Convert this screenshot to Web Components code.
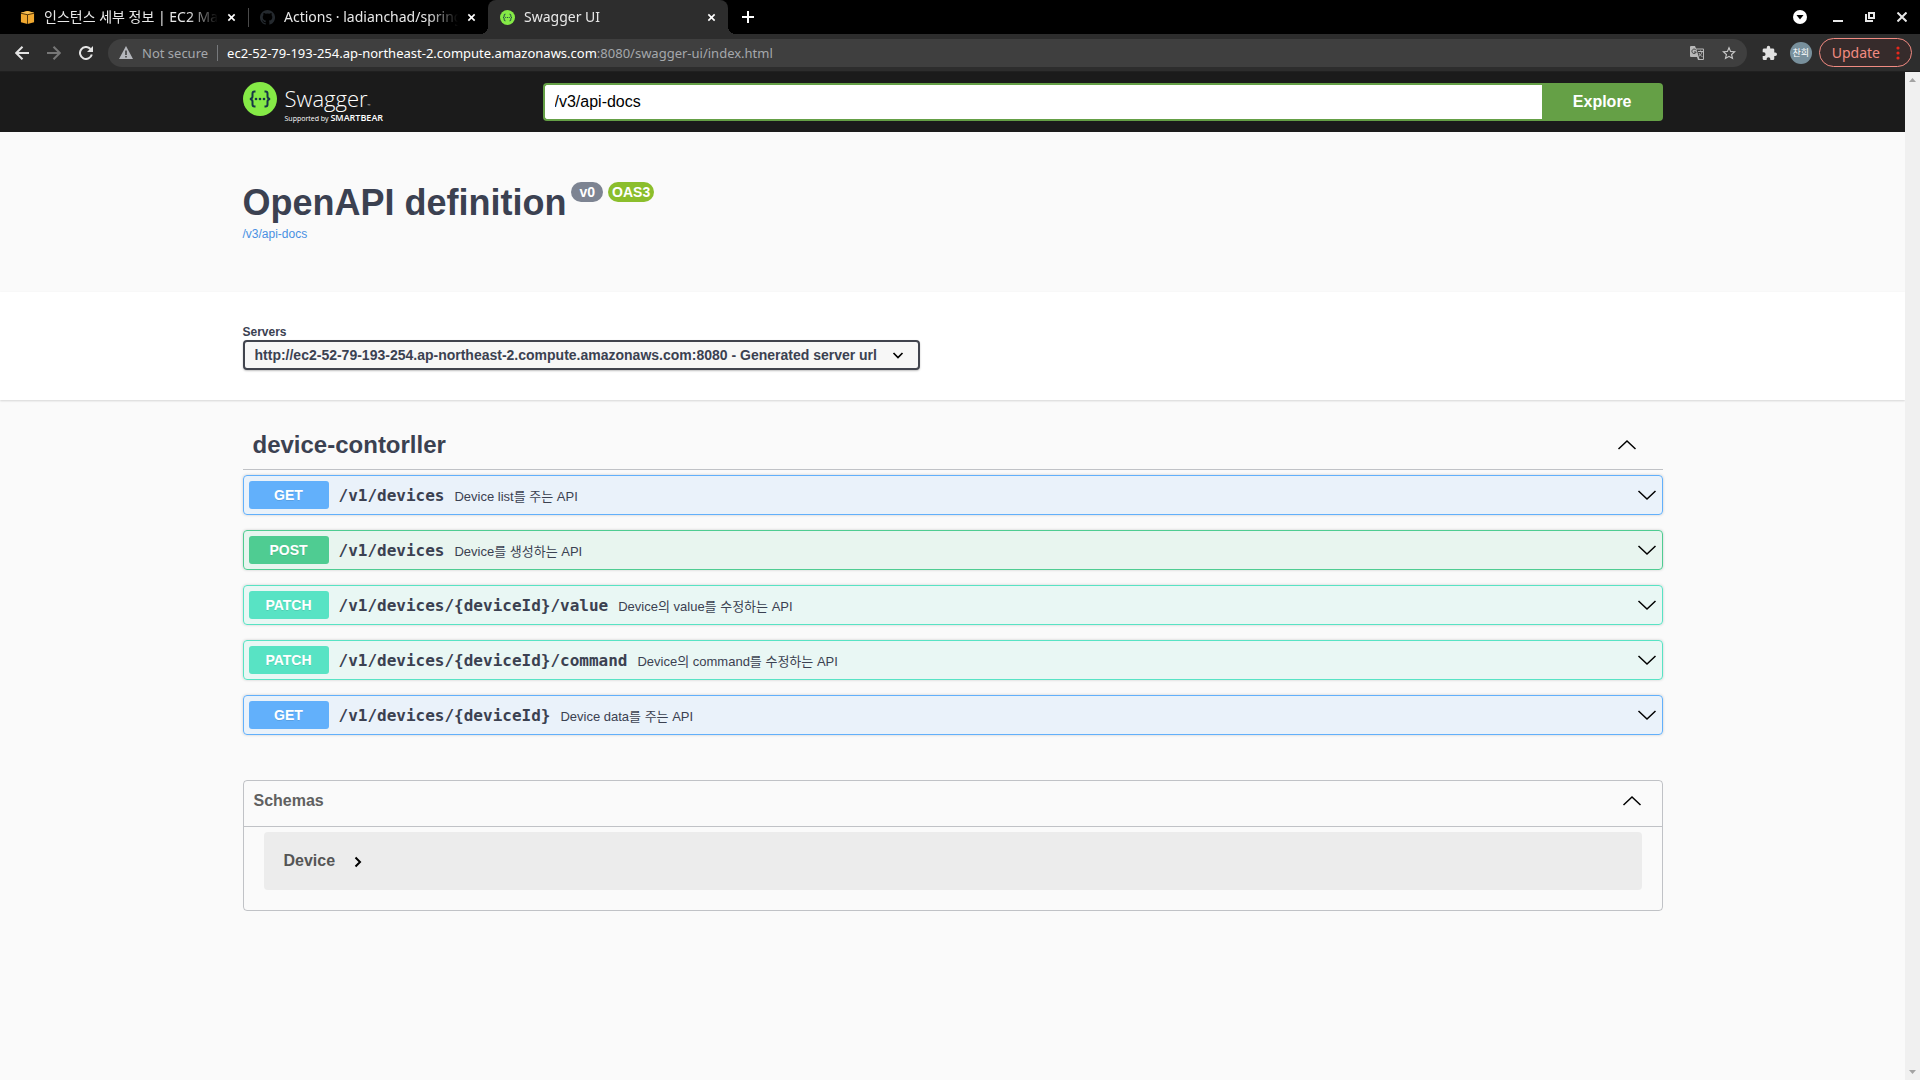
<!DOCTYPE html>
<html lang="en">
<head>
<meta charset="utf-8">
<title>Swagger UI</title>
<style>
  html, body {
    margin: 0;
    height: 100%;
  }

  body {
    font-family: "Liberation Sans", "Noto Sans CJK KR", sans-serif;
    color: #3b4151;
    background: #fafafa;
  }
</style>
</head>
<body>
<browser-window>
  <browser-tab slot="tabs" icon="cube">인스턴스 세부 정보 | EC2 Management</browser-tab>
  <browser-tab slot="tabs" icon="github">Actions · ladianchad/spring-server</browser-tab>
  <browser-tab slot="tabs" icon="swagger" active>Swagger UI</browser-tab>
  <address-bar slot="toolbar" host="ec2-52-79-193-254.ap-northeast-2.compute.amazonaws.com" path=":8080/swagger-ui/index.html"></address-bar>

  <swagger-topbar url="/v3/api-docs"></swagger-topbar>
  <api-info version="v0" spec="OAS3" href="/v3/api-docs">OpenAPI definition</api-info>
  <server-picker url="http://ec2-52-79-193-254.ap-northeast-2.compute.amazonaws.com:8080 - Generated server url"></server-picker>
  <tag-section name="device-contorller">
    <op-block method="get" path="/v1/devices">Device list를 주는 API</op-block>
    <op-block method="post" path="/v1/devices">Device를 생성하는 API</op-block>
    <op-block method="patch" path="/v1/devices/{deviceId}/value">Device의 value를 수정하는 API</op-block>
    <op-block method="patch" path="/v1/devices/{deviceId}/command">Device의 command를 수정하는 API</op-block>
    <op-block method="get" path="/v1/devices/{deviceId}">Device data를 주는 API</op-block>
  </tag-section>
  <schema-list>
    <schema-model>Device</schema-model>
  </schema-list>
</browser-window>

<script>
/* Inner markup of every icon, with the viewBox it is drawn in */
const icons = {
  cube: ['0 0 16 16', '<path fill="#f0a830" d="M1 3 8 1l7 2v10l-7 2-7-2z"/><path fill="#f7bd50" d="m1 3 7-2 7 2-7 2z"/><path fill="none" stroke="#4a2f05" stroke-width="1" d="m1 3.500 7 1.500 7-1.500M8 5v10"/>'],
  github: ['0 0 16 16', '<path fill="#24292e" d="M8 0a8 8 0 0 0-2.530 15.590c.4.070.55-.17.55-.38l-.01-1.490c-2.010.37-2.530-.49-2.690-.94-.09-.23-.48-.94-.82-1.130-.28-.15-.68-.52-.01-.53.63-.01 1.080.58 1.230.82.72 1.210 1.870.87 2.330.66.07-.52.28-.87.51-1.070-1.780-.2-3.640-.89-3.640-3.950 0-.87.31-1.590.82-2.150-.08-.2-.36-1.020.08-2.120 0 0 .67-.21 2.200.82a7.600 7.600 0 0 1 4 0c1.530-1.040 2.200-.82 2.200-.82.44 1.100.16 1.920.08 2.120.51.56.82 1.270.82 2.150 0 3.070-1.870 3.750-3.650 3.950.29.25.54.73.54 1.480l-.01 2.200c0 .21.15.46.55.38A8 8 0 0 0 8 0z"/>'],
  swagger: ['0 0 34 34', '<circle cx="17" cy="17" r="17" fill="#85ea46"/><path fill="none" stroke="#173647" stroke-width="2" d="M12.500 9.500h-1q-2 0-2 2v3q0 2-2.500 2.500 2.500.5 2.500 2.500v3q0 2 2 2h1M21.500 9.500h1q2 0 2 2v3q0 2 2.500 2.500-2.500.5-2.500 2.500v3q0 2-2 2h-1"/><g fill="#173647"><circle cx="13" cy="17" r="1.300"/><circle cx="17" cy="17" r="1.300"/><circle cx="21" cy="17" r="1.300"/></g>'],
  close: ['0 0 10 10', '<path fill="none" stroke="#fff" stroke-width="1.800" d="m1.500 1.500 7 7m0-7-7 7"/>'],
  plus: ['0 0 12 12', '<path fill="none" stroke="#fff" stroke-width="2" d="M6 0v12M0 6h12"/>'],
  down: ['0 0 14 14', '<circle cx="7" cy="7" r="7" fill="#fff"/><path d="M3.500 5h7L7 9.500z"/>'],
  minimize: ['0 0 10 10', '<path fill="#e8e8e8" d="M0 8h10v2H0z"/>'],
  restore: ['0 0 10 10', '<path fill="none" stroke="#e8e8e8" stroke-width="2" d="M4 1h5v5H4zM1 2v7h7"/>'],
  quit: ['0 0 10 10', '<path fill="none" stroke="#e8e8e8" stroke-width="2" d="m.5.5 9 9m0-9-9 9"/>'],
  back: ['0 0 14 14', '<path fill="none" stroke="#e4e4e4" stroke-width="2" d="M14 7H1.500M7.500.7 1.200 7l6.300 6.300"/>'],
  forward: ['0 0 14 14', '<path fill="none" stroke="#777" stroke-width="2" d="M0 7h12.500M6.500.7 12.800 7l-6.300 6.300"/>'],
  reload: ['0 0 14 14', '<path fill="none" stroke="#e4e4e4" stroke-width="2" d="M12.800 8.500A6 6 0 1 1 11.500 3"/><path fill="#e4e4e4" d="M14 0v6H8z"/>'],
  warning: ['0 0 14 13', '<path fill="#b4b6bb" d="M7 0l7 13H0z"/><path fill="#3f3f3f" d="M6.200 4.500h1.600V9H6.200zM6.200 10h1.600v1.600H6.200z"/>'],
  translate: ['0 0 14 14', '<path fill="#b8b8b8" d="M1 0h4l1 2.500h7a1 1 0 0 1 1 1V13a1 1 0 0 1-1 1H8l-1-3H1a1 1 0 0 1-1-1V1a1 1 0 0 1 1-1z"/><path fill="#3f3f3f" d="m6.500 3.500 3 9.500H13V3.500z"/><path fill="none" stroke="#3f3f3f" d="M6 4.200A2.200 2.200 0 1 0 6.200 6H4"/><path fill="none" stroke="#b8b8b8" d="M8 5.500h5M10.500 4.500v1M12 6c-.5 2-2 3.500-3 4.200M9 7c.5 1.500 2 3 3.500 3.700"/>'],
  star: ['0 0 24 24', '<path fill="#c9c9c9" d="m24 9.200-8.600-.7L12 .6 8.600 8.500 0 9.200l6.500 5.700-2 8.400 7.500-4.500 7.500 4.500-2-8.400zM12 16.600l-4.500 2.700 1.200-5.100-4-3.500 5.200-.4L12 5.500l2.100 4.800 5.200.4-4 3.500 1.200 5.100z"/>'],
  puzzle: ['1 0 22 22', '<path fill="#e0e0e0" d="M20.500 11H19V7a2 2 0 0 0-2-2h-4V3.500a2.500 2.500 0 0 0-5 0V5H4a2 2 0 0 0-2 2v3.800h1.500a2.700 2.700 0 0 1 0 5.400H2V20a2 2 0 0 0 2 2h3.800v-1.500a2.700 2.700 0 0 1 5.400 0V22H17a2 2 0 0 0 2-2v-4h1.500a2.500 2.500 0 0 0 0-5z"/>'],
  dots: ['0 0 4 14', '<g fill="#e8281c"><circle cx="2" cy="2" r="1.600"/><circle cx="2" cy="7" r="1.600"/><circle cx="2" cy="12" r="1.600"/></g>'],
  'scroll-up': ['0 0 7 4', '<path fill="#a3a3a3" d="M0 4 3.500 0 7 4z"/>'],
  'scroll-down': ['0 0 7 4', '<path fill="#a3a3a3" d="m0 0 3.500 4L7 0z"/>'],
  expand: ['0 0 20 20', '<path fill="none" stroke="#000" stroke-width="1.500" d="m1.500 6 8.500 8 8.500-8"/>'],
  collapse: ['0 0 20 20', '<path fill="none" stroke="#000" stroke-width="1.500" d="m1.500 14 8.500-8 8.500 8"/>'],
  select: ['0 0 20 20', '<path fill="none" stroke="#000" stroke-width="1.700" d="m5.500 8 4.500 4.500L14.500 8"/>'],
  model: ['0 0 20 20', '<path fill="none" stroke="#000" stroke-width="2" d="m7.500 6.500 4.500 4.500-4.500 4.500"/>']
}

/**
 * Draws one icon.
 *
 * @param {string} name - Key in the icons object.
 * @param {number} width - Width in pixels.
 * @param {number} height - Height in pixels, same as the width by default.
 * @returns {string} The svg markup.
 */
const icon = (name, width, height = width) =>
  `<svg width="${width}" height="${height}" viewBox="${icons[name][0]}" aria-hidden="true">${icons[name][1]}</svg>`

/* Shared reset, every shadow root starts with it */
const base = `
  :host, * { box-sizing: border-box; }
  svg { display: block; flex: none; }
  button {
    font: inherit;
    color: inherit;
    background: none;
    border: 0;
    padding: 0;
    margin: 0;
    cursor: pointer;
  }
  .wrapper {
    max-width: 1460px;
    margin: 0 auto;
    padding: 0 20px;
  }
`

/**
 * Registers a custom element that renders its markup once.
 *
 * @param {string} name - The tag name.
 * @param {Function} render - Gets the element, returns the shadow root markup.
 */
const define = (name, render) => {
  customElements.define(name, class extends HTMLElement {
    constructor () {
      super()
      this.attachShadow({ mode: 'open' })
    }

    connectedCallback () {
      const template = document.createElement('template')
      template.innerHTML = render(this)
      this.shadowRoot.replaceChildren(template.content.cloneNode(true))
    }
  })
}

define('browser-window', () => `
  <style>
    ${base}
    :host {
      display: flex;
      flex-direction: column;
      height: 100vh;
    }
    .tabs {
      display: flex;
      align-items: center;
      height: 34px;
      padding-left: 8px;
      background: #000;
      flex: none;
    }
    .new { padding: 0 14px; }
    .controls {
      display: flex;
      align-items: center;
      gap: 22px;
      margin-left: auto;
      padding-right: 13px;
    }
    .controls > :first-child { margin-right: 4px; }
    .view {
      display: flex;
      flex: 1;
      min-height: 0;
    }
    main {
      flex: 1;
      overflow: hidden;
    }
    .scroll {
      display: flex;
      flex-direction: column;
      justify-content: space-between;
      align-items: center;
      width: 15px;
      padding: 6px 0;
      background: #f0f0f0;
    }
  </style>
  <div class="tabs">
    <slot name="tabs"></slot>
    <button class="new" aria-label="New tab">${icon('plus', 12)}</button>
    <div class="controls">
      <button aria-label="Search tabs">${icon('down', 14)}</button>
      <button aria-label="Minimize">${icon('minimize', 10)}</button>
      <button aria-label="Restore">${icon('restore', 10)}</button>
      <button aria-label="Close">${icon('quit', 10)}</button>
    </div>
  </div>
  <slot name="toolbar"></slot>
  <div class="view">
    <main><slot></slot></main>
    <div class="scroll">${icon('scroll-up', 7, 4)}${icon('scroll-down', 7, 4)}</div>
  </div>
`)

define('browser-tab', (el) => `
  <style>
    ${base}
    :host {
      display: flex;
      align-items: center;
      gap: 9px;
      flex: 0 1 240px;
      min-width: 0;
      height: 34px;
      padding: 0 12px;
      position: relative;
      font: 14px/20px "Noto Sans", "Noto Sans CJK KR", sans-serif;
      color: #e8e8e8;
    }
    :host(:not([active]):not(:first-child))::before {
      content: "";
      position: absolute;
      left: 0;
      top: 8px;
      width: 1px;
      height: 19px;
      background: #4a4a4a;
    }
    :host([active]) {
      background: #2d2d2d;
      border-radius: 8px 8px 0 0;
    }
    /* outward curves at the foot of the active tab */
    :host([active])::before,
    :host([active])::after {
      content: "";
      position: absolute;
      bottom: 0;
      width: 8px;
      height: 8px;
    }
    :host([active])::before {
      right: 100%;
      background: radial-gradient(circle at 0 0, #000 8px, #2d2d2d 8px);
    }
    :host([active])::after {
      left: 100%;
      background: radial-gradient(circle at 100% 0, #000 8px, #2d2d2d 8px);
    }
    .title {
      flex: 1;
      overflow: hidden;
      white-space: nowrap;
      mask-image: linear-gradient(to left, transparent, #000 30px);
    }
  </style>
  ${icon(el.getAttribute('icon'), 15)}
  <span class="title"><slot></slot></span>
  <button aria-label="Close tab">${icon('close', 9)}</button>
`)

define('address-bar', (el) => `
  <style>
    ${base}
    :host {
      display: flex;
      align-items: center;
      height: 38px;
      padding: 0 8px 0 15px;
      background: #2d2d2d;
      border-bottom: 1px solid #202020;
      font: 13px/20px "Noto Sans", "Noto Sans CJK KR", sans-serif;
      flex: none;
    }
    .nav {
      display: flex;
      gap: 18px;
      margin-right: 15px;
    }
    .omnibox {
      display: flex;
      align-items: center;
      flex: 1;
      height: 28px;
      padding: 0 11px;
      border-radius: 14px;
      background: #3f3f3f;
      color: #a5a8ac;
    }
    .state { margin: 0 9px; }
    .location {
      flex: 1;
      padding-left: 9px;
      line-height: 16px;
      border-left: 1px solid #77797c;
    }
    .location b {
      font-weight: 400;
      color: #fff;
    }
    .page { margin-left: 18px; }
    .extensions { margin: 0 13px 0 15px; }
    .avatar {
      width: 22px;
      height: 22px;
      border-radius: 50%;
      background: #78909c;
      color: #fff;
      font-size: 9px;
      line-height: 22px;
      text-align: center;
    }
    .update {
      display: flex;
      align-items: center;
      gap: 16px;
      height: 29px;
      margin-left: 7px;
      padding: 0 11px 0 12px;
      border: 1px solid #f28b82;
      border-radius: 15px;
      background: #362b2b;
      color: #f28b82;
      font-size: 14px;
    }
  </style>
  <div class="nav">
    <button aria-label="Back">${icon('back', 14)}</button>
    <button aria-label="Forward">${icon('forward', 14)}</button>
    <button aria-label="Reload">${icon('reload', 14)}</button>
  </div>
  <div class="omnibox">
    ${icon('warning', 14, 13)}
    <span class="state">Not secure</span>
    <span class="location"><b>${el.getAttribute('host')}</b>${el.getAttribute('path')}</span>
    <button class="page" aria-label="Translate">${icon('translate', 14)}</button>
    <button class="page" aria-label="Bookmark">${icon('star', 14)}</button>
  </div>
  <button class="extensions" aria-label="Extensions">${icon('puzzle', 15)}</button>
  <button class="avatar">찬희</button>
  <button class="update">Update ${icon('dots', 4, 14)}</button>
`)

define('swagger-topbar', (el) => `
  <style>
    ${base}
    :host {
      display: block;
      padding: 10px 0;
      background: #1b1b1b;
    }
    .wrapper {
      display: flex;
      align-items: center;
    }
    .logo {
      display: flex;
      gap: 8px;
      flex: 0 0 300px;
      height: 40px;
      color: #fff;
      text-decoration: none;
      font-family: "Open Sans", sans-serif;
    }
    .name {
      display: block;
      padding-top: 3px;
      font-size: 22px;
      font-weight: 300;
      line-height: 26px;
    }
    .name small {
      font-size: 4px;
      line-height: 1;
    }
    .by {
      display: block;
      margin-top: 2px;
      font-size: 7px;
      line-height: 8px;
    }
    .by b {
      font-size: 9px;
      font-weight: 600;
      line-height: 1;
    }
    form {
      display: flex;
      flex: 1;
      height: 38px;
    }
    input {
      flex: 1;
      min-width: 0;
      padding: 0 10px;
      border: 2px solid #65a046;
      border-right: 0;
      border-radius: 4px 0 0 4px;
      background: #fff;
      color: #000;
      font: 16px "Liberation Sans", sans-serif;
    }
    form button {
      padding: 0 31px;
      border-radius: 0 4px 4px 0;
      background: #65a046;
      color: #fff;
      font-size: 16px;
      font-weight: 700;
    }
  </style>
  <div class="wrapper">
    <a class="logo" href="#">
      ${icon('swagger', 34)}
      <span>
        <span class="name">Swagger<small>™</small></span>
        <span class="by">Supported by <b>SMARTBEAR</b></span>
      </span>
    </a>
    <form>
      <input type="text" aria-label="Definition url" value="${el.getAttribute('url')}">
      <button type="button">Explore</button>
    </form>
  </div>
`)

define('api-info', (el) => `
  <style>
    ${base}
    :host {
      display: block;
      padding: 50px 0;
    }
    .title {
      display: flex;
      align-items: flex-start;
      gap: 5px;
      margin-bottom: 3px;
    }
    h2 {
      margin: 0;
      font-size: 36px;
      line-height: 41px;
    }
    .badge {
      padding: 0 4px;
      border-radius: 10px;
      background: #8bbe2c;
      color: #fff;
      font-size: 14px;
      font-weight: 700;
      line-height: 20px;
    }
    .version {
      padding: 0 8px;
      background: #7d8492;
    }
    a {
      display: block;
      color: #4990e2;
      font-size: 12px;
      line-height: 16px;
      text-decoration: none;
    }
  </style>
  <div class="wrapper">
    <div class="title">
      <h2><slot></slot></h2>
      <span class="badge version">${el.getAttribute('version')}</span>
      <span class="badge">${el.getAttribute('spec')}</span>
    </div>
    <a href="${el.getAttribute('href')}">${el.getAttribute('href')}</a>
  </div>
`)

define('server-picker', (el) => `
  <style>
    ${base}
    :host {
      display: block;
      padding: 30px 0;
      background: #fff;
      box-shadow: 0 1px 2px 0 rgba(0, 0, 0, .15);
    }
    label {
      display: block;
      padding-top: 2px;
      font-size: 12px;
      font-weight: 700;
      line-height: 16px;
    }
    .select {
      display: inline-grid;
      align-items: center;
      vertical-align: top;
    }
    .select > * { grid-area: 1 / 1; }
    .select svg {
      justify-self: end;
      margin-right: 12px;
      pointer-events: none;
    }
    select {
      appearance: none;
      height: 30px;
      padding: 0 40px 0 10px;
      border: 2px solid #41444e;
      border-radius: 4px;
      background: #f7f7f7;
      box-shadow: 0 1px 2px 0 rgba(0, 0, 0, .25);
      color: #3b4151;
      font: 700 14px "Liberation Sans", sans-serif;
    }
  </style>
  <div class="wrapper">
    <label for="servers">Servers</label>
    <div class="select">
      <select id="servers"><option>${el.getAttribute('url')}</option></select>
      ${icon('select', 20)}
    </div>
  </div>
`)

define('tag-section', (el) => `
  <style>
    ${base}
    :host {
      display: block;
      padding: 20px 0 45px;
    }
    .header {
      display: flex;
      align-items: center;
      justify-content: space-between;
      margin-bottom: 5px;
      padding: 10px 26px 10px 10px;
      border-bottom: 1px solid rgba(59, 65, 81, .3);
    }
    h3 {
      margin: 0;
      font-size: 24px;
      line-height: 29px;
    }
    .operations {
      display: flex;
      flex-direction: column;
      gap: 15px;
    }
  </style>
  <div class="wrapper">
    <div class="header">
      <h3>${el.getAttribute('name')}</h3>
      <button aria-label="Collapse operation">${icon('collapse', 20)}</button>
    </div>
    <div class="operations"><slot></slot></div>
  </div>
`)

define('op-block', (el) => `
  <style>
    ${base}
    :host {
      --method: 98, 176, 251;
      display: flex;
      align-items: center;
      gap: 10px;
      height: 40px;
      padding: 0 5px;
      border: 1px solid rgb(var(--method));
      border-radius: 4px;
      background: rgba(var(--method), .1);
      box-shadow: 0 0 3px rgba(0, 0, 0, .19);
    }
    :host([method="post"]) { --method: 79, 204, 146; }
    :host([method="patch"]) { --method: 88, 227, 196; }
    .method {
      width: 80px;
      border-radius: 3px;
      background: rgb(var(--method));
      color: #fff;
      font-size: 14px;
      font-weight: 700;
      line-height: 28px;
      text-align: center;
      text-shadow: 0 1px 0 rgba(0, 0, 0, .1);
      text-transform: uppercase;
    }
    .path {
      padding-top: 2px;
      font: 700 16px/20px "DejaVu Sans Mono", monospace;
    }
    .summary {
      flex: 1;
      padding-top: 4px;
      font-size: 13px;
      line-height: 18px;
    }
  </style>
  <span class="method">${el.getAttribute('method')}</span>
  <span class="path">${el.getAttribute('path')}</span>
  <span class="summary"><slot></slot></span>
  <button aria-label="Expand operation">${icon('expand', 20)}</button>
`)

define('schema-list', () => `
  <style>
    ${base}
    :host { display: block; }
    section {
      border: 1px solid rgba(59, 65, 81, .3);
      border-radius: 4px;
      padding-bottom: 20px;
    }
    .header {
      display: flex;
      justify-content: space-between;
      margin-bottom: 5px;
      padding: 10px 20px 15px 10px;
      border-bottom: 1px solid rgba(59, 65, 81, .3);
      color: #606060;
    }
    h4 {
      margin: 0;
      font-size: 16px;
      line-height: 20px;
    }
  </style>
  <div class="wrapper">
    <section>
      <div class="header">
        <h4>Schemas</h4>
        <button aria-label="Collapse schemas">${icon('collapse', 20)}</button>
      </div>
      <slot></slot>
    </section>
  </div>
`)

define('schema-model', () => `
  <style>
    ${base}
    :host {
      display: block;
      margin: 0 20px;
      padding: 19px 20px;
      border-radius: 4px;
      background: #ececec;
    }
    button {
      display: flex;
      align-items: center;
      gap: 13px;
      color: #555;
      font-size: 16px;
      font-weight: 700;
      line-height: 20px;
    }
  </style>
  <button><slot></slot>${icon('model', 20)}</button>
`)
</script>
</body>
</html>
